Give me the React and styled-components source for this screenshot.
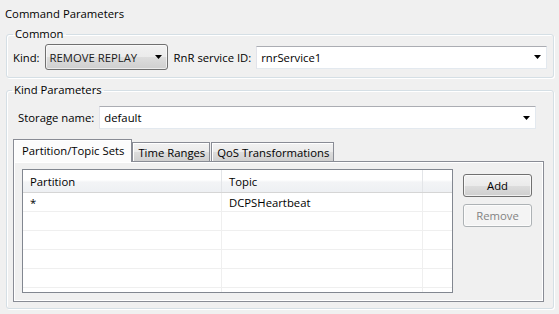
import React from 'react';
import styled, { createGlobalStyle } from 'styled-components';

const Global = createGlobalStyle`
  html, body { margin: 0; padding: 0; background: #f0f0f0; }
  body {
    font-family: "Open Sans", "Liberation Sans", sans-serif;
    font-size: 11.3px;
    color: #000;
  }
  #root { width: 559px; height: 314px; overflow: hidden; }
`;

const Page = styled.div`
  width: 559px;
  height: 314px;
  box-sizing: border-box;
  padding: 6px 5px 5px 6px;
  display: flex;
  flex-direction: column;
  gap: 4px;
`;

const Title = styled.div`
  height: 16px;
  line-height: 16px;
  margin-left: -1px;
  white-space: nowrap;
`;

const Group = styled.fieldset`
  margin: 0;
  min-width: 0;
  min-height: 0;
  padding: ${(p) => p.$pad};
  border: 1px solid #d5dfe5;
  border-radius: 3px;
  box-shadow: inset 1px 1px 0 #fff, 1px 1px 0 #fff;
  ${(p) => (p.$grow ? 'flex: 1;' : '')}
  display: flex;
  flex-direction: column;
`;

const Legend = styled.legend`
  padding: 0 2px;
  margin-left: ${(p) => p.$ml || 0}px;
  height: 16px;
  line-height: 16px;
  white-space: nowrap;
`;

const Row = styled.div`
  display: flex;
  align-items: center;
  gap: 5px;
  height: ${(p) => p.$h}px;
  margin: ${(p) => p.$m || '0'};
`;

const Label = styled.span`
  white-space: nowrap;
  margin-left: ${(p) => p.$ml || 0}px;
`;

const ComboButton = styled.div`
  width: 123px;
  height: 26px;
  box-sizing: border-box;
  border: 1px solid #707070;
  border-radius: 3px;
  background: linear-gradient(#f2f2f2 0%, #ebebeb 50%, #dddddd 51%, #cfcfcf 100%);
  box-shadow: inset 0 0 0 1px rgba(255, 255, 255, 0.6);
  display: flex;
  align-items: center;
  justify-content: space-between;
  padding: 0 5px 0 4px;
  color: #1a1a1a;
  white-space: nowrap;
`;

const EditCombo = styled.div`
  flex: 1;
  height: 23px;
  box-sizing: border-box;
  background: #fff;
  border: 1px solid #e3e9ef;
  border-top-color: #abadb3;
  border-left-color: #e2e3ea;
  display: flex;
  align-items: center;
  justify-content: space-between;
  padding: 0 5px 0 4px;
  white-space: nowrap;
`;

const Arrow = () => (
  <svg width="7" height="4" viewBox="0 0 7 4">
    <polygon points="0,0 7,0 3.5,4" fill="#000" />
  </svg>
);

const Folder = styled.div`
  flex: 1;
  min-height: 0;
  display: flex;
  flex-direction: column;
  margin: 10px 3px 0 0;
`;

const TabStrip = styled.div`
  display: flex;
  align-items: flex-end;
  height: 23px;
  margin-bottom: -1px;
  position: relative;
  z-index: 1;
`;

const Tab = styled.div`
  box-sizing: border-box;
  height: ${(p) => (p.$active ? 23 : 20)}px;
  padding: ${(p) => (p.$active ? '0 7px 1px 8px' : '0 4px 0 5px')};
  border: 1px solid #898c95;
  border-bottom: ${(p) => (p.$active ? 'none' : '1px solid #898c95')};
  margin-right: ${(p) => (p.$active ? 0 : 1)}px;
  background: ${(p) =>
    p.$active
      ? '#fcfcfc'
      : 'linear-gradient(#f2f2f2 0%, #ebebeb 50%, #dddddd 51%, #d0d0d0 100%)'};
  box-shadow: inset 1px 1px 0 #fff;
  display: flex;
  align-items: center;
  white-space: nowrap;
`;

const Panel = styled.div`
  flex: 1;
  min-height: 0;
  display: flex;
  gap: 10px;
  padding: 7px 11px 8px 8px;
  border: 1px solid #898c95;
  background: #f0f0f0;
  box-shadow: inset 1px 1px 0 #fff, inset -1px -1px 0 #fff;
`;

const Table = styled.div`
  width: 431px;
  box-sizing: border-box;
  border: 1px solid #828790;
  background: #fff;
  display: flex;
  flex-direction: column;
  overflow: hidden;
`;

const Cols = '199px 201px 1fr';

const HeaderRow = styled.div`
  display: grid;
  grid-template-columns: ${Cols};
  height: 23px;
  flex: none;
  box-sizing: border-box;
  border-bottom: 1px solid #d5d5d5;
  background: linear-gradient(#ffffff 0%, #ffffff 45%, #f3f4f6 55%, #eef0f3 100%);
`;

const HeadCell = styled.div`
  border-right: 1px solid ${(p) => (p.$last ? 'transparent' : '#e3e5e8')};
  padding-left: 7px;
  display: flex;
  align-items: center;
  white-space: nowrap;
`;

const BodyRow = styled.div`
  display: grid;
  grid-template-columns: ${Cols};
  height: ${(p) => (p.$fill ? 'auto' : '19px')};
  flex: ${(p) => (p.$fill ? '1' : 'none')};
  box-sizing: border-box;
  border-bottom: ${(p) => (p.$fill ? 'none' : '1px solid #efefef')};
`;

const Cell = styled.div`
  border-right: 1px solid ${(p) => (p.$last ? 'transparent' : '#efefef')};
  padding-left: 7px;
  display: flex;
  align-items: center;
  white-space: nowrap;
`;

const Buttons = styled.div`
  display: flex;
  flex-direction: column;
  gap: 7px;
  padding-top: 5px;
`;

const Button = styled.div`
  width: 69px;
  height: 23px;
  box-sizing: border-box;
  border-radius: 3px;
  border: 1px solid ${(p) => (p.$disabled ? '#adb2b5' : '#707070')};
  background: ${(p) =>
    p.$disabled
      ? '#f4f4f4'
      : 'linear-gradient(#f2f2f2 0%, #ebebeb 50%, #dddddd 51%, #cfcfcf 100%)'};
  box-shadow: inset 0 0 0 1px rgba(255, 255, 255, 0.7);
  color: ${(p) => (p.$disabled ? '#838383' : '#000')};
  display: flex;
  align-items: center;
  justify-content: center;
`;

const rows = [
  ['*', 'DCPSHeartbeat'],
  ['', ''],
  ['', ''],
  ['', ''],
  ['', ''],
];

export default function App() {
  return (
    <>
      <Global />
      <Page>
        <Title>Command Parameters</Title>
        <Group $pad="2px 6px 7px 6px">
          <Legend>Common</Legend>
          <Row $h={26}>
            <Label>Kind:</Label>
            <ComboButton>
              <span>REMOVE REPLAY</span>
              <Arrow />
            </ComboButton>
            <Label $ml={1}>RnR service ID:</Label>
            <EditCombo>
              <span>rnrService1</span>
              <Arrow />
            </EditCombo>
          </Row>
        </Group>
        <Group $pad="8px 6px 6px 6px" $grow>
          <Legend $ml={-1}>Kind Parameters</Legend>
          <Row $h={23} $m="0 11px 0 5px">
            <Label>Storage name:</Label>
            <EditCombo>
              <span>default</span>
              <Arrow />
            </EditCombo>
          </Row>
          <Folder>
            <TabStrip>
              <Tab $active>Partition/Topic Sets</Tab>
              <Tab>Time Ranges</Tab>
              <Tab>QoS Transformations</Tab>
            </TabStrip>
            <Panel>
              <Table>
                <HeaderRow>
                  <HeadCell>Partition</HeadCell>
                  <HeadCell>Topic</HeadCell>
                  <HeadCell $last />
                </HeaderRow>
                {rows.map((r, i) => (
                  <BodyRow key={i}>
                    <Cell>{r[0]}</Cell>
                    <Cell>{r[1]}</Cell>
                    <Cell $last />
                  </BodyRow>
                ))}
                <BodyRow $fill>
                  <Cell />
                  <Cell />
                  <Cell $last />
                </BodyRow>
              </Table>
              <Buttons>
                <Button>Add</Button>
                <Button $disabled>Remove</Button>
              </Buttons>
            </Panel>
          </Folder>
        </Group>
      </Page>
    </>
  );
}
